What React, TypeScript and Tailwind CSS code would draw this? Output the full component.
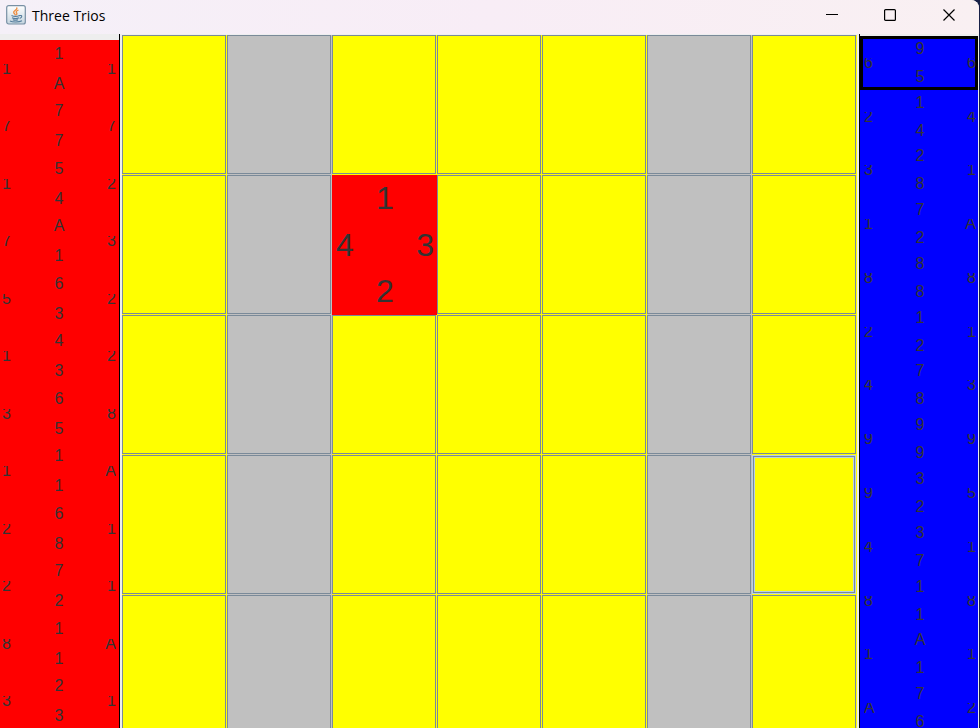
type Side = { n: string; s: string; w: string; e: string };

const redHand: Side[] = "1A11 7777 5412 A173 6352 4312 6538 111A 6821 7221 118A 2331"
  .split(" ")
  .map(([n, s, w, e]) => ({ n, s, w, e }));
const blueHand: Side[] =
  "9566 1424 2831 721A 8888 1221 7843 9999 3295 3741 1188 A111 76A2"
    .split(" ")
    .map(([n, s, w, e]) => ({ n, s, w, e }));

const cells = Array.from({ length: 35 }, (_, i) => ({ row: Math.floor(i / 7), col: i % 7 }));

function HandCard({ card, selected, blue }: { card: Side; selected?: boolean; blue?: boolean }) {
  return (
    <button
      className={`flex min-h-0 w-full flex-1 items-center justify-between text-base leading-4 ${
        blue ? "bg-[#0000ff] pr-0.5 pl-1" : "bg-[#ff0000] pr-[3px] pl-0.5"
      } ${selected ? "ring-3 ring-black ring-inset" : ""}`}
    >
      <span className="flex h-2.5 w-3 items-center overflow-hidden">{card.w}</span>
      <span className={`flex flex-col items-center ${blue ? "gap-3" : "gap-3.5"}`}>
        <span>{card.n}</span>
        <span>{card.s}</span>
      </span>
      <span className="flex h-2.5 w-3 items-center justify-end overflow-hidden">{card.e}</span>
    </button>
  );
}

function Cell({ row, col }: { row: number; col: number }) {
  if (row === 1 && col === 2) {
    return (
      <button className="flex items-center justify-between bg-[#ff0000] pr-[3px] pl-1 text-[32px] leading-8">
        <span>4</span>
        <span className="flex h-full flex-col items-center justify-between pt-[7px] pb-2">
          <span>1</span>
          <span>2</span>
        </span>
        <span>3</span>
      </button>
    );
  }
  const hole = col === 1 || col === 5;
  const focused = row === 3 && col === 6;
  return (
    <button
      aria-label={`Row ${row + 1}, column ${col + 1}`}
      className={`flex pr-px pb-px ${hole ? "bg-[#c0c0c0]" : "bg-[#ffff00]"}`}
    >
      {focused ? (
        <span className="h-full w-full border border-[#b8cfe5]">
          <span className="block h-full w-full border border-[#7a8a99]">
            <span className="block h-full w-full border border-[#b8cfe5]" />
          </span>
        </span>
      ) : (
        <span className="h-full w-full border border-[#7a8a99]" />
      )}
    </button>
  );
}

function JavaIcon() {
  return (
    <svg width="20" height="20" viewBox="0 0 20 20" fill="none" aria-hidden="true">
      <defs>
        <linearGradient id="tile" x1="0" y1="0" x2="0" y2="1">
          <stop offset="0" stopColor="#fff" />
          <stop offset="1" stopColor="#c5d5df" />
        </linearGradient>
      </defs>
      <rect x=".7" y=".7" width="18.6" height="18.3" rx="2" fill="url(#tile)" stroke="#7890a4" strokeWidth="1.2" />
      <path d="M10.5 2.5c2 2-3.5 3-2.8 5 .3 1 1.5 1.6 1.7 2.8M12.5 5c-2 .8-3 1.8-1.8 3 .6.8.1 1.5-.4 2" stroke="#ed8b3c" strokeWidth="1.3" />
      <path d="M5.5 10.5c2 .9 6 .9 8 0M6 12.8c2 .9 5 .9 7 0M6.8 14.7c1.5.6 3.8.6 5.2 0M4 16c2.5 1.4 9 1.4 12-.2M13.5 10.6c3-.9 3 2 .2 2.8" stroke="#557d9c" strokeWidth="1.1" />
    </svg>
  );
}

export default function App() {
  return (
    <div className="h-screen overflow-hidden bg-[#172047] font-['Liberation_Sans',Arial,sans-serif] text-[#333333]">
      <div className="mr-px flex flex-col overflow-hidden rounded-tr-lg bg-[#eeeeee]">
        <header className="flex h-[34px] shrink-0 items-center bg-linear-to-r from-[#f5f0f8] via-[#f8edf6] to-[#f9f0f2] pl-1.5 text-black">
          <span className="mb-1">
            <JavaIcon />
          </span>
          <h1 className="mb-0.5 ml-1.5 flex-1 font-['Open_Sans',sans-serif] text-sm">Three Trios</h1>
          <div className="flex h-full items-center pb-1">
            <button aria-label="Minimize" className="flex w-[58px] justify-center">
              <svg width="12" height="12" stroke="currentColor"><path d="M0 5.5h12" /></svg>
            </button>
            <button aria-label="Maximize" className="flex w-[58px] justify-center">
              <svg width="12" height="12" fill="none" stroke="currentColor" strokeWidth="1.2"><rect x=".6" y=".6" width="10.8" height="10.8" rx="1" /></svg>
            </button>
            <button aria-label="Close" className="flex w-[60px] justify-center">
              <svg width="12" height="12" stroke="currentColor" strokeWidth="1.2"><path d="M.5.5l11 11M11.5.5l-11 11" /></svg>
            </button>
          </div>
        </header>
        <main className="flex h-[701px]">
          <section aria-label="Red hand" className="flex w-[120px] shrink-0 flex-col border-r border-black pt-1.5 pb-[5px]">
            {redHand.map((card, i) => (
              <HandCard key={i} card={card} />
            ))}
          </section>
          <section aria-label="Board" className="mx-0.5 mt-px grid flex-1 grid-cols-7 grid-rows-5">
            {cells.map((c) => (
              <Cell key={`${c.row}-${c.col}`} row={c.row} col={c.col} />
            ))}
          </section>
          <section aria-label="Blue hand" className="mr-px flex w-[119px] shrink-0 flex-col border-l border-black pt-0.5">
            {blueHand.map((card, i) => (
              <HandCard key={i} card={card} blue selected={i === 0} />
            ))}
          </section>
        </main>
      </div>
    </div>
  );
}
